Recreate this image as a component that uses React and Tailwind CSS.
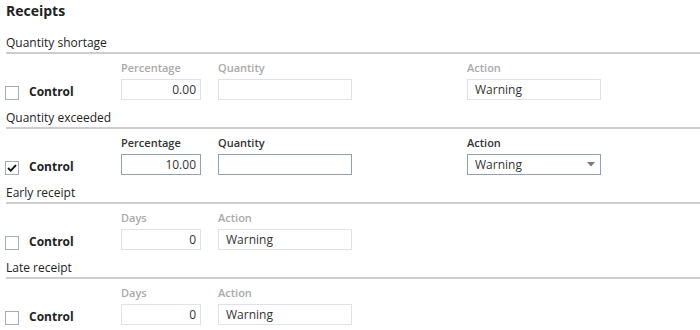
import { useState } from 'react';

const sections = [
  {
    title: 'Quantity shortage',
    checked: false,
    fields: [
      { label: 'Percentage', value: '0.00', width: 'w-[80px]', align: 'right' },
      { label: 'Quantity', value: '', width: 'w-[134px]' },
      { label: 'Action', value: 'Warning', width: 'w-[134px]', gap: 'ml-[98px]' },
    ],
  },
  {
    title: 'Quantity exceeded',
    checked: true,
    fields: [
      { label: 'Percentage', value: '10.00', width: 'w-[80px]', align: 'right' },
      { label: 'Quantity', value: '', width: 'w-[134px]' },
      { label: 'Action', value: 'Warning', width: 'w-[134px]', gap: 'ml-[98px]', select: true },
    ],
  },
  {
    title: 'Early receipt',
    checked: false,
    fields: [
      { label: 'Days', value: '0', width: 'w-[80px]', align: 'right' },
      { label: 'Action', value: 'Warning', width: 'w-[134px]' },
    ],
  },
  {
    title: 'Late receipt',
    checked: false,
    fields: [
      { label: 'Days', value: '0', width: 'w-[80px]', align: 'right' },
      { label: 'Action', value: 'Warning', width: 'w-[134px]' },
    ],
  },
];

function Checkbox({ checked, onChange }) {
  return (
    <button type="button"
            onClick={onChange}
            className="w-[14px] h-[14px] border border-[#a3aeb9] bg-white flex items-center justify-center shrink-0">
      {checked && (
        <svg width="10" height="8" viewBox="0 0 10 8">
          <path d="M1 4 L3.8 6.6 L9 1.2" fill="none" stroke="#111" strokeWidth="1.9" />
        </svg>
      )}
    </button>
  );
}

function Field({ field, enabled }) {
  const border = enabled ? 'border-[#8fa1b2]' : 'border-[#dde3e9]';
  return (
    <div className={`flex flex-col ${field.gap || ''}`}>
      <span className={`h-[14px] leading-[14px] text-[11px] font-semibold ${enabled ? 'text-[#333]' : 'text-[#a9a9a9]'}`}>
        {field.label}
      </span>
      <div className={`mt-[4px] h-[21px] ${field.width} border ${border} bg-white flex items-center text-[12px] text-[#333] ${field.align === 'right' ? 'pr-[4px]' : 'pl-[7px]'}`}>
        <span className={`flex-1 truncate ${field.align === 'right' ? 'text-right' : 'text-left'}`}>{field.value}</span>
        {field.select && (
          <svg className="mr-[5px]" width="8" height="5" viewBox="0 0 8 5">
            <path d="M0 0 L8 0 L4 4.5 Z" fill="#7a7a7a" />
          </svg>
        )}
      </div>
    </div>
  );
}

export default function App() {
  const [checks, setChecks] = useState(sections.map(s => s.checked));

  return (
    <div className="w-[700px] h-[330px] bg-white overflow-hidden text-[#333] font-['Open_Sans',sans-serif]">
      <h1 className="pl-[6px] h-[22px] leading-[22px] text-[14px] font-bold text-[#222]">
        Receipts
      </h1>

      <div className="mt-[10px] flex flex-col">
        {sections.map((s, i) => (
          <section key={s.title} className="flex flex-col h-[75px]">
            <div className="ml-[6px] h-[22px] pt-[3px] leading-[16px] text-[12px] text-[#222] border-b-2 border-[#cdcdcd]">
              {s.title}
            </div>

            <div className="flex items-end pt-[7px]">
              <div className="flex items-center w-[121px] pl-[5px] h-[14px]">
                <Checkbox checked={checks[i]}
                          onChange={() => setChecks(c => c.map((v, j) => j === i ? !v : v))} />
                <span className="ml-[10px] -mt-[3px] text-[12px] font-bold text-[#222]">Control</span>
              </div>

              <div className="flex gap-[17px]">
                {s.fields.map(f => (
                  <Field key={f.label} field={f} enabled={checks[i]} />
                ))}
              </div>
            </div>
          </section>
        ))}
      </div>
    </div>
  );
}
